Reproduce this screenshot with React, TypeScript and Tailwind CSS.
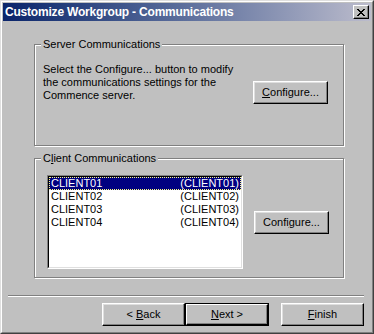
import React from "react";

const font = "font-['Liberation_Sans',Arial,sans-serif]";

function Btn({
    children,
    width,
    isDefault,
}: {
    children: React.ReactNode;
    width: string;
    isDefault?: boolean;
}) {
    if (isDefault) {
        return (
            <div className={`${width} h-[23px] border border-black`}>
                <div className="flex h-full w-full items-center justify-center border border-t-white border-l-white border-r-black border-b-black bg-[#c0c0c0] text-[11px] text-black shadow-[inset_-1px_-1px_0_#808080]">
                    {children}
                </div>
            </div>
        );
    }
    return (
        <div
            className={`${width} flex h-[23px] items-center justify-center border border-t-white border-l-white border-r-black border-b-black bg-[#c0c0c0] text-[11px] text-black shadow-[inset_-1px_-1px_0_#808080,inset_1px_1px_0_#dfdfdf]`}
        >
            {children}
        </div>
    );
}

function GroupBox({
    label,
    height,
    children,
}: {
    label: React.ReactNode;
    height: string;
    children: React.ReactNode;
}) {
    return (
        <div
            className={`relative w-[310px] ${height} border border-[#808080] shadow-[1px_1px_0_white,inset_1px_1px_0_white]`}
        >
            <div className="absolute left-[6px] top-[-7px] bg-[#c0c0c0] px-[2px] text-[11px] leading-[13px] text-black">
                {label}
            </div>
            {children}
        </div>
    );
}

const clients = ["CLIENT01", "CLIENT02", "CLIENT03", "CLIENT04"];

export default function App() {
    return (
        <div
            className={`${font} h-[334px] w-[374px] border border-t-[#dfdfdf] border-l-[#dfdfdf] border-r-[#404040] border-b-[#404040] bg-[#c0c0c0]`}
        >
            <div className="flex h-full w-full flex-col border border-t-white border-l-white border-r-[#808080] border-b-[#808080] p-[1px]">
                {/* title bar */}
                <div className="flex h-[18px] items-center bg-gradient-to-r from-[#0a246a] to-[#bcbccc] pl-[2px] pr-[2px]">
                    <span className="text-[12px] font-bold leading-[18px] tracking-[-0.2px] text-white">
                        Customize Workgroup - Communications
                    </span>
                    <div className="ml-auto flex h-[14px] w-[16px] items-center justify-center border border-t-white border-l-white border-r-black border-b-black bg-[#c0c0c0] shadow-[inset_-1px_-1px_0_#808080]">
                        <svg width="8" height="7" viewBox="0 0 8 7">
                            <path
                                d="M0 0h2v1h1v1h2V1h1V0h2v1H7v1H6v1H5v1h1v1h1v1h1v1H6V6H5V5H3v1H2v1H0V6h1V5h1V4h1V3H2V2H1V1H0z"
                                fill="black"
                            />
                        </svg>
                    </div>
                </div>

                {/* body */}
                <div className="flex flex-col pt-[23px]">
                    <div className="pl-[31px]">
                        <GroupBox label="Server Communications" height="h-[102px]">
                            <div className="flex items-start pl-[8px] pt-[18px]">
                                <p className="w-[200px] text-[11px] leading-[13px] text-black">
                                    Select the Configure... button to modify
                                    the communications settings for the
                                    Commence server.
                                </p>
                                <div className="ml-[10px] mt-[18px]">
                                    <Btn width="w-[75px]">
                                        <span>
                                            <u>C</u>onfigure...
                                        </span>
                                    </Btn>
                                </div>
                            </div>
                        </GroupBox>
                    </div>

                    <div className="mt-[12px] pl-[31px]">
                        <GroupBox
                            label={
                                <span>
                                    C<u>l</u>ient Communications
                                </span>
                            }
                            height="h-[120px]"
                        >
                            <div className="flex items-start pl-[12px] pt-[16px]">
                                <div className="h-[94px] w-[196px] border border-t-[#808080] border-l-[#808080] border-r-white border-b-white">
                                    <div className="h-full w-full border border-t-black border-l-black border-r-[#dfdfdf] border-b-[#dfdfdf] bg-white">
                                        {clients.map((c, i) => (
                                            <div
                                                key={c}
                                                className={`flex h-[13px] items-center justify-between px-[2px] text-[11px] leading-[13px] ${
                                                    i === 0
                                                        ? "bg-[#000080] text-white outline-1 outline-dotted outline-offset-[-1px] outline-[#ffff80]"
                                                        : "text-black"
                                                }`}
                                            >
                                                <span>{c}</span>
                                                <span>({c})</span>
                                            </div>
                                        ))}
                                    </div>
                                </div>
                                <div className="ml-[11px] mt-[36px]">
                                    <Btn width="w-[75px]">
                                        <span>
                                            Confi<u>g</u>ure...
                                        </span>
                                    </Btn>
                                </div>
                            </div>
                        </GroupBox>
                    </div>

                    {/* separator */}
                    <div className="ml-[5px] mt-[17px] h-[2px] w-[356px] border-t border-t-[#808080] border-b border-b-white" />

                    {/* buttons */}
                    <div className="mt-[6px] flex pl-[99px]">
                        <Btn width="w-[83px]">
                            <span>
                                &lt; <u>B</u>ack
                            </span>
                        </Btn>
                        <Btn width="w-[84px]" isDefault>
                            <span>
                                <u>N</u>ext &gt;
                            </span>
                        </Btn>
                        <div className="ml-[12px]">
                            <Btn width="w-[83px]">
                                <span>
                                    <u>F</u>inish
                                </span>
                            </Btn>
                        </div>
                    </div>
                </div>
            </div>
        </div>
    );
}
